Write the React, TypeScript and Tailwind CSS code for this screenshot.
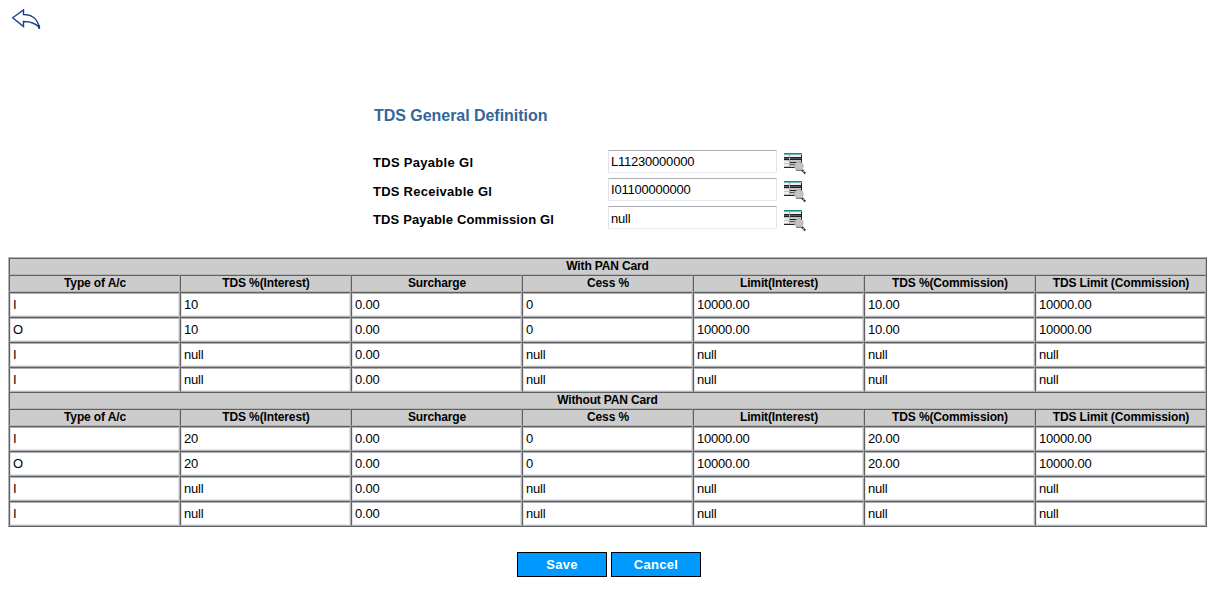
const fields = [
  { label: 'TDS Payable Gl', value: 'L11230000000', labelStyle: 'pt-0 tracking-[0.3px]', inputPad: 'pb-px', iconPad: 'pt-[2px]' },
  { label: 'TDS Receivable Gl', value: 'I01100000000', labelStyle: 'pt-px tracking-[0.25px]', inputPad: 'pb-px', iconPad: 'pt-[2px]' },
  { label: 'TDS Payable Commission Gl', value: 'null', labelStyle: 'pt-px tracking-[0.13px]', inputPad: 'pt-px', iconPad: 'pt-[3px]' },
];

const columns = [
  'Type of A/c',
  'TDS %(Interest)',
  'Surcharge',
  'Cess %',
  'Limit(Interest)',
  'TDS %(Commission)',
  'TDS Limit (Commission)',
];

const rowsFor = (rate: string) => [
  ['I', rate, '0.00', '0', '10000.00', `${rate}.00`, '10000.00'],
  ['O', rate, '0.00', '0', '10000.00', `${rate}.00`, '10000.00'],
  ['I', 'null', '0.00', 'null', 'null', 'null', 'null'],
  ['I', 'null', '0.00', 'null', 'null', 'null', 'null'],
];

const cell = 'border border-t-[#606060] border-l-[#606060] border-r-[#b4b4b4] border-b-[#b4b4b4] bg-[#cccccc]';
const inputBorder = 'border border-t-[#abadb3] border-x-[#e2e3ea] border-b-[#e3e9ef] rounded-[1px] bg-white text-black outline-none';

function BackIcon() {
  return (
    <svg width="30" height="22" viewBox="0 0 30 22" fill="none" stroke="#1c3f8c" strokeWidth="1.4" className="block">
      <path d="M1.7 8.8 L12.5 0.9 V5.5 C20 5.5 26.5 9.5 28.2 18.5 C24.5 14 20.5 12.5 12.5 12.5 V17.6 Z" />
      <path d="M28.2 16 V20" strokeWidth="1.8" />
    </svg>
  );
}

function LookupIcon() {
  return (
    <svg width="24" height="24" viewBox="0 0 24 24" shapeRendering="crispEdges" className="block">
      <path d="M1 1h18v15H1z" fill="#c6c6c6" />
      <path d="M1 1h18v1H1z" fill="#168d8d" />
      <path d="M1 2h18v1H1z" fill="#6fb5b5" />
      <path d="M1 3h5v2H1zM7 3h11v2H7zM1 9h5v2H1zM1 12h5v2H1z" fill="#eeeeee" />
      <path d="M1 5h17v1H1zM1 7h17v1H1zM7 10h11v1H7zM1 15h12v1H1zM18 3h1v11h-1z" fill="#222222" />
      <path d="M1 6h17v1H1zM7 12h5v1H7z" fill="#585858" />
      <path d="M6 3h1v12H6z" fill="#aaaaaa" />
      <g shapeRendering="auto">
        <circle cx="15.8" cy="14" r="4.3" fill="#c3c3c3" stroke="#a0a0a0" strokeWidth="0.8" />
        <path d="M13 18.4h6.5" stroke="#777777" />
        <path d="M19 18l3.5 3.8" stroke="#333333" strokeWidth="2.2" strokeDasharray="2 0.7" />
      </g>
    </svg>
  );
}

function Section({ title, rate }: { title: string; rate: string }) {
  return (
    <>
      <div className={`${cell} h-[17px] text-center text-[12px] font-bold leading-[15px] tracking-[-0.15px]`}>{title}</div>
      <div className="grid grid-cols-7">
        {columns.map((name) => (
          <div key={name} className={`${cell} h-[17px] whitespace-nowrap pl-px text-center text-[12px] font-bold leading-[14px] tracking-[-0.13px]`}>
            {name}
          </div>
        ))}
        {rowsFor(rate).map((row, r) =>
          row.map((value, c) => (
            <div key={`${r}-${c}`} className={`${cell} h-[25px]`}>
              <input
                defaultValue={value}
                className={`${inputBorder} block h-[23px] w-full px-[2px] pb-px text-[13px] tracking-[-0.22px]`}
              />
            </div>
          )),
        )}
      </div>
    </>
  );
}

export default function App() {
  return (
    <div className="h-[595px] w-[1213px] overflow-hidden bg-white font-['Liberation_Sans',Arial,sans-serif] text-black">
      <div className="h-[105px] pl-[11px] pt-[9px]">
        <BackIcon />
      </div>
      <div className="ml-[373px] w-[440px]">
        <h1 className="h-[45px] pl-px text-[16px] font-bold leading-[21px] tracking-[-0.04px] text-[#336699]">TDS General Definition</h1>
        {fields.map((f) => (
          <div key={f.label} className="flex h-[28px] items-start">
            <label className={`${f.labelStyle} w-[235px] whitespace-nowrap text-[13px] font-bold leading-[25px]`}>{f.label}</label>
            <input
              defaultValue={f.value}
              className={`${inputBorder} ${f.inputPad} h-[23px] w-[169px] px-[2px] text-[13px] tracking-[-0.22px]`}
            />
            <div className={`${f.iconPad} ml-[6px]`}>
              <LookupIcon />
            </div>
          </div>
        ))}
      </div>
      <div className="ml-[8px] mt-[23px] w-[1199px] border border-b-[#606060] border-l-[#b4b4b4] border-r-[#606060] border-t-[#b4b4b4]">
        <Section title="With PAN Card" rate="10" />
        <Section title="Without PAN Card" rate="20" />
      </div>
      <div className="ml-[517px] mt-[25px] flex gap-[4px]">
        {['Save', 'Cancel'].map((name) => (
          <button
            key={name}
            className="h-[25px] w-[90px] border border-black bg-[#0099ff] text-[13px] font-bold leading-[22px] tracking-[0.3px] text-white"
          >
            {name}
          </button>
        ))}
      </div>
    </div>
  );
}
